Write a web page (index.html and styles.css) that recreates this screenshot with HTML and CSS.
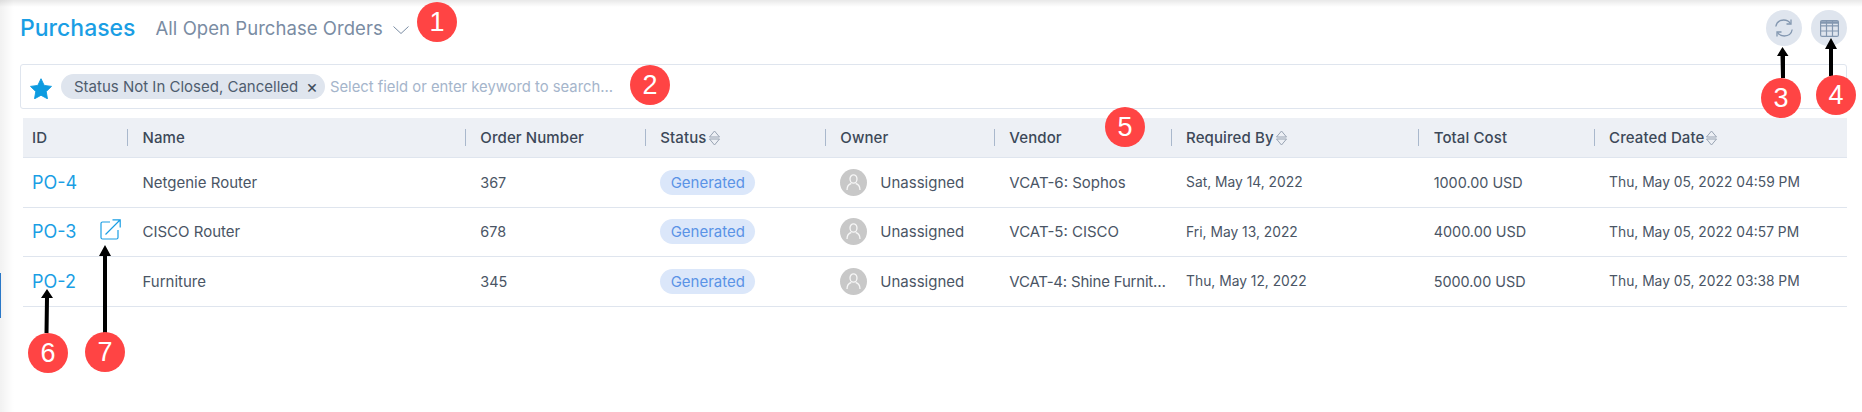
FILE: index.html
```html
<!DOCTYPE html>
<html lang="en">
<head>
<meta charset="utf-8">
<title>Purchases</title>
<link rel="stylesheet" href="styles.css">
</head>
<body>
<div class="page">
  <div class="nav-marker"></div>
  <header class="topbar">
    <h1 class="title">Purchases</h1>
    <span class="subtitle">All Open Purchase Orders</span>
    <svg class="chevron" width="16" height="8" viewBox="0 0 16 8"><path d="M.5.5 8 7.5 15.500.5" fill="none" stroke="#7a8ca3" stroke-width="1"/></svg>
    <div class="actions">
      <button class="round-btn"><svg width="20" height="20" viewBox="0 0 20 20" fill="none" stroke="#8397b0" stroke-width="1.300"><path d="M1.800 8.500C2.500 4.500 5.800 2 9.800 2c3 0 5.200 1.300 6.700 3.600"/><path d="M17 1.500v4.500h-4.500"/><path d="M18.200 11.500c-.7 4-4 6.500-8 6.500-3 0-5.200-1.300-6.700-3.600"/><path d="M3 18.500V14h4.500"/></svg></button>
      <button class="round-btn"><svg width="19" height="17" viewBox="0 0 19 17" fill="none" stroke="#8397b0" stroke-width="1.200"><rect x=".6" y=".6" width="17.800" height="15.800" rx="1.500"/><path d="M.6 5.800h17.800M.6 11h17.800M6.500.6v15.800M12.500.6v15.800"/><path d="M.6 2.500h17.800" stroke-width="2.500"/></svg></button>
    </div>
  </header>

  <div class="search">
    <svg class="star" width="22" height="21" viewBox="0 0 24 23"><path d="M12 .8l3.500 7.300 8 1.100-5.800 5.600 1.400 8-7.100-3.900-7.100 3.900 1.400-8L.5 9.200l8-1.100z" fill="#0d9be0" stroke="#0d9be0" stroke-linejoin="round"/></svg>
    <span class="tag">Status Not In Closed, Cancelled<span class="tag-x">×</span></span>
    <span class="placeholder">Select field or enter keyword to search...</span>
  </div>

  <div class="table">
    <div class="row head">
      <div class="hcell first"><span class="hlabel">ID</span></div>
      <div class="hcell"><span class="hlabel">Name</span></div>
      <div class="hcell"><span class="hlabel">Order Number</span></div>
      <div class="hcell"><span class="hlabel">Status<svg class="sort" width="11" height="16" viewBox="0 0 11 16"><path d="M5.500 1 10.500 7H.5zM.5 9h10L5.500 15z" fill="none" stroke="#98a3b2" stroke-width="1"/></svg></span></div>
      <div class="hcell"><span class="hlabel">Owner</span></div>
      <div class="hcell"><span class="hlabel">Vendor</span></div>
      <div class="hcell"><span class="hlabel">Required By<svg class="sort" width="11" height="16" viewBox="0 0 11 16"><path d="M5.500 1 10.500 7H.5zM.5 9h10L5.500 15z" fill="none" stroke="#98a3b2" stroke-width="1"/></svg></span></div>
      <div class="hcell"><span class="hlabel">Total Cost</span></div>
      <div class="hcell"><span class="hlabel">Created Date<svg class="sort" width="11" height="16" viewBox="0 0 11 16"><path d="M5.500 1 10.500 7H.5zM.5 9h10L5.500 15z" fill="none" stroke="#98a3b2" stroke-width="1"/></svg></span></div>
    </div>

    <div class="row">
      <div class="cell first"><a class="po">PO-4</a></div>
      <div class="cell">Netgenie Router</div>
      <div class="cell num">367</div>
      <div class="cell"><span class="pill">Generated</span></div>
      <div class="cell"><span class="avatar"><svg width="15" height="17" viewBox="0 0 15 17" fill="none" stroke="#fff" stroke-width="1.300" opacity=".85"><ellipse cx="7.500" cy="5" rx="3.500" ry="4.200"/><path d="M1 16c0-4 2.500-6 4.300-6.500M14 16c0-4-2.500-6-4.300-6.500"/></svg></span>Unassigned</div>
      <div class="cell">VCAT-6: Sophos</div>
      <div class="cell date">Sat, May 14, 2022</div>
      <div class="cell num">1000.00 USD</div>
      <div class="cell date">Thu, May 05, 2022 04:59 PM</div>
    </div>

    <div class="row">
      <div class="cell first"><a class="po">PO-3</a><svg class="open" width="21" height="21" viewBox="0 0 21 21" fill="none" stroke="#1a9ee4" stroke-width="1.200"><path d="M10 3H2.500A1.500 1.500 0 0 0 1 4.500v14A1.500 1.500 0 0 0 2.500 20h14a1.500 1.500 0 0 0 1.500-1.500V11"/><path d="M5.500 15.500 20 1M12.500.8h7.700v7.700"/></svg></div>
      <div class="cell">CISCO Router</div>
      <div class="cell num">678</div>
      <div class="cell"><span class="pill">Generated</span></div>
      <div class="cell"><span class="avatar"><svg width="15" height="17" viewBox="0 0 15 17" fill="none" stroke="#fff" stroke-width="1.300" opacity=".85"><ellipse cx="7.500" cy="5" rx="3.500" ry="4.200"/><path d="M1 16c0-4 2.500-6 4.300-6.500M14 16c0-4-2.500-6-4.300-6.500"/></svg></span>Unassigned</div>
      <div class="cell">VCAT-5: CISCO</div>
      <div class="cell date">Fri, May 13, 2022</div>
      <div class="cell num">4000.00 USD</div>
      <div class="cell date">Thu, May 05, 2022 04:57 PM</div>
    </div>

    <div class="row">
      <div class="cell first"><a class="po">PO-2</a></div>
      <div class="cell">Furniture</div>
      <div class="cell num">345</div>
      <div class="cell"><span class="pill">Generated</span></div>
      <div class="cell"><span class="avatar"><svg width="15" height="17" viewBox="0 0 15 17" fill="none" stroke="#fff" stroke-width="1.300" opacity=".85"><ellipse cx="7.500" cy="5" rx="3.500" ry="4.200"/><path d="M1 16c0-4 2.500-6 4.300-6.500M14 16c0-4-2.500-6-4.300-6.500"/></svg></span>Unassigned</div>
      <div class="cell trim">VCAT-4: Shine Furnit…</div>
      <div class="cell date">Thu, May 12, 2022</div>
      <div class="cell num">5000.00 USD</div>
      <div class="cell date">Thu, May 05, 2022 03:38 PM</div>
    </div>
  </div>

  <svg class="arrows" width="1862" height="412" viewBox="0 0 1862 412">
    <path d="M1781 78 1780.500 56H1777L1782.500 47 1788.500 56H1785L1785 78z"/>
    <path d="M1829 76V49H1825L1831 38 1837 49H1833V76z"/>
    <path d="M44.500 333 45 298H41L47 289 53 298H49L48.500 333z"/>
    <path d="M103 333V256H99L105 245 111 256H107V333z"/>
  </svg>
  <span class="badge b1">1</span>
  <span class="badge b2">2</span>
  <span class="badge b3">3</span>
  <span class="badge b4">4</span>
  <span class="badge b5">5</span>
  <span class="badge b6">6</span>
  <span class="badge b7">7</span>
</div>
</body>
</html>
```

FILE: styles.css
```css
* { box-sizing: border-box; }
html, body { margin: 0; padding: 0; background: #fff; }
body { font-family: Inter, "Noto Sans", "Liberation Sans", sans-serif; overflow: hidden; }

.page {
  position: relative;
  width: 1862px;
  height: 412px;
  padding: 10px 15px 0 20px;
  overflow: hidden;
  background-image:
    linear-gradient(to right, rgba(0, 0, 0, .055), rgba(0, 0, 0, 0) 14px),
    linear-gradient(to bottom, rgba(0, 0, 0, .09), rgba(0, 0, 0, 0) 7px);
}
.nav-marker {
  position: absolute;
  left: 0;
  top: 273px;
  width: 1px;
  height: 45px;
  background: #2a78c8;
}

.topbar { display: flex; align-items: center; height: 36px; }
.title { margin: 0; font-size: 23px; font-weight: 500; color: #1a9ee4; }
.subtitle { margin-left: 20px; font-size: 18.500px; letter-spacing: .05px; color: #7a8ca3; }
.chevron { margin-left: 10px; margin-top: 3px; }
.actions { margin-left: auto; display: flex; gap: 9px; }
.round-btn {
  width: 36px;
  height: 36px;
  padding: 0;
  border: 0;
  border-radius: 50%;
  background: #dfe5ee;
  display: flex;
  align-items: center;
  justify-content: center;
}

.search {
  margin-top: 18px;
  height: 45px;
  border: 1px solid #dfe5ee;
  border-radius: 3px;
  display: flex;
  align-items: center;
  padding-left: 9px;
}
.star { margin-top: 3px; flex: none; }
.tag {
  margin-left: 9px;
  height: 25px;
  width: 264px;
  padding-left: 13px;
  border-radius: 12.500px;
  background: #dfe5ee;
  color: #4f5d6e;
  font-size: 15px;
  display: flex;
  align-items: center;
}
.tag-x { margin-left: auto; margin-right: 7px; font-size: 18px; color: #3f4c5c; }
.placeholder { margin-left: 5px; font-size: 14.800px; color: #a5b5cb; }

.table { margin-top: 9px; margin-left: 3px; }
.row {
  display: grid;
  grid-template-columns: 104px 337.800px 180px 180px 169px 176.800px 247.600px 175.400px 253.600px;
  height: 49.500px;
  border-bottom: 1px solid #dfe5ee;
}
.row.head { height: 40px; background: #edf0f5; }
.hcell { display: flex; align-items: center; }
.hlabel {
  height: 17px;
  padding-left: 14.500px;
  border-left: 1px solid #a9b8cc;
  display: flex;
  align-items: center;
  gap: 2px;
  font-size: 15px;
  letter-spacing: .1px;
  font-weight: 500;
  color: #3c4858;
}
.hcell.first { padding-left: 9px; }
.hcell.first .hlabel { border-left: 0; padding-left: 0; }
.sort { margin-top: 1px; flex: none; }

.cell {
  display: flex;
  align-items: center;
  padding-left: 15.500px;
  font-size: 15px;
  color: #4a5565;
  min-width: 0;
  white-space: nowrap;
}
.cell.date { font-size: 13.800px; }
.cell.num { font-size: 14.400px; }
.cell.trim { letter-spacing: -.2px; }
.cell.first { padding-left: 9px; }
.po { width: 68px; font-size: 18px; color: #1a9ee4; }
.open { flex: none; margin-top: -5px; }
.pill {
  height: 25px;
  width: 95px;
  border-radius: 12.500px;
  background: #dbe7fa;
  color: #5a93e6;
  display: flex;
  align-items: center;
  justify-content: center;
}
.avatar {
  width: 27px;
  height: 27px;
  margin-right: 13px;
  border-radius: 50%;
  background: #c8c8c8;
  display: flex;
  align-items: center;
  justify-content: center;
  flex: none;
}

.arrows { position: absolute; left: 0; top: 0; fill: #000; pointer-events: none; }
.badge {
  position: absolute;
  width: 40px;
  height: 40px;
  border-radius: 50%;
  background: #ff4444;
  color: #fff;
  font-family: "Liberation Sans", Arial, sans-serif;
  font-size: 27px;
  line-height: 40px;
  text-align: center;
}
.b1 { left: 417px; top: 2px; }
.b2 { left: 630px; top: 65px; }
.b3 { left: 1761px; top: 78px; }
.b4 { left: 1816px; top: 75px; }
.b5 { left: 1105px; top: 107px; }
.b6 { left: 28px; top: 333px; }
.b7 { left: 85px; top: 332px; }
```
